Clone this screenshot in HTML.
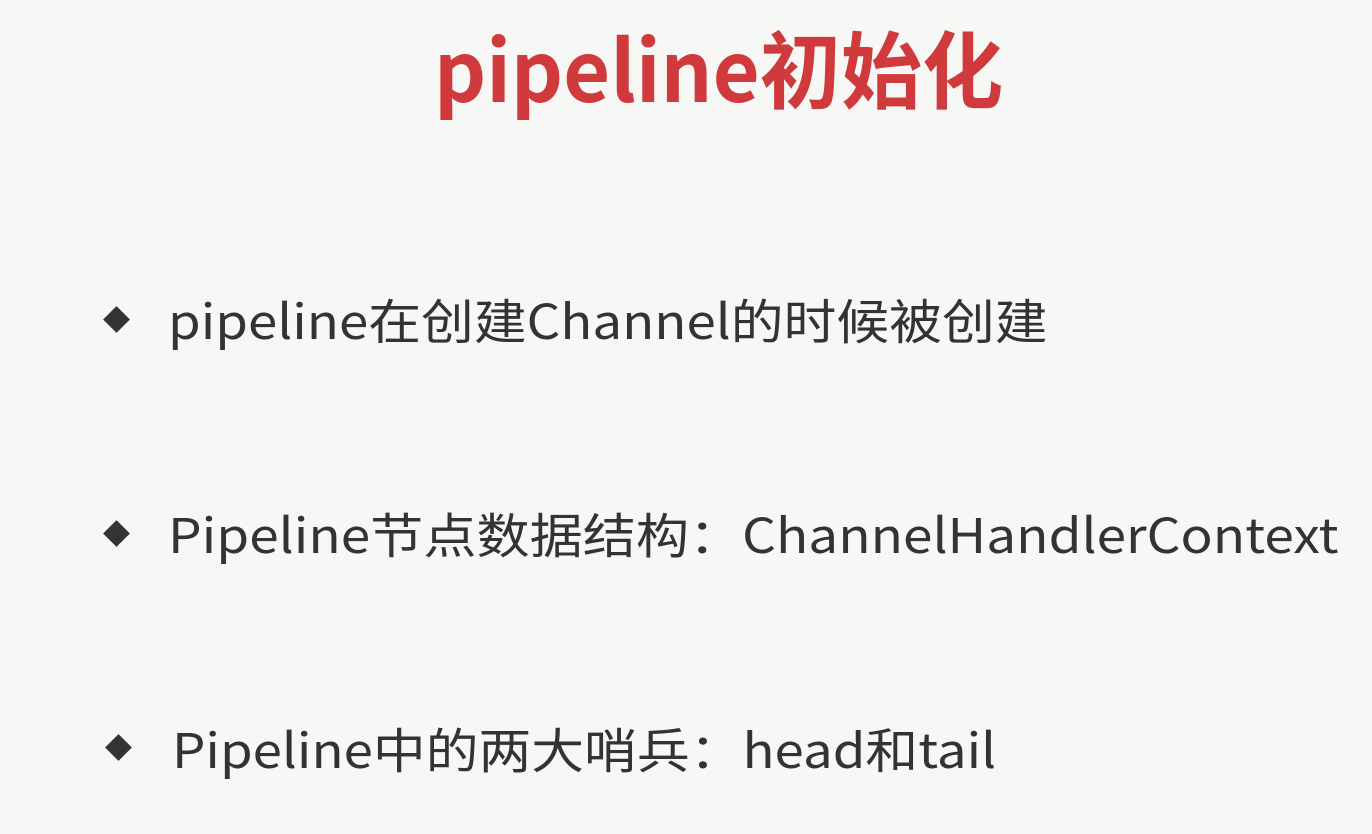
<!DOCTYPE html>
<html><head><meta charset="utf-8"><style>
html,body{margin:0;padding:0}
body{width:1372px;height:834px;background:#f7f7f5;position:relative;overflow:hidden;font-family:"Noto Sans CJK SC","Liberation Sans",sans-serif}
.t{position:absolute;line-height:1;white-space:nowrap;transform-origin:0 0}
.title{left:434px;top:25px;font-size:84px;font-weight:bold;color:#d03a3d;transform:scaleX(0.966)}
.b{font-size:48px;color:#333;transform:scaleX(1.1)}
.l2{transform:scaleX(1.107)}
.d{position:absolute;width:19px;height:19px;background:#333;transform:rotate(45deg)}
</style></head><body>
<div class="t title">pipeline初始化</div>
<div class="d" style="left:107px;top:310px"></div>
<div class="t b" style="left:168px;top:294px">pipeline在创建Channel的时候被创建</div>
<div class="d" style="left:107px;top:524px"></div>
<div class="t b l2" style="left:168px;top:508px">Pipeline节点数据结构：ChannelHandlerContext</div>
<div class="d" style="left:109px;top:738px"></div>
<div class="t b" style="left:172px;top:723px">Pipeline中的两大哨兵：head和tail</div>
</body></html>
